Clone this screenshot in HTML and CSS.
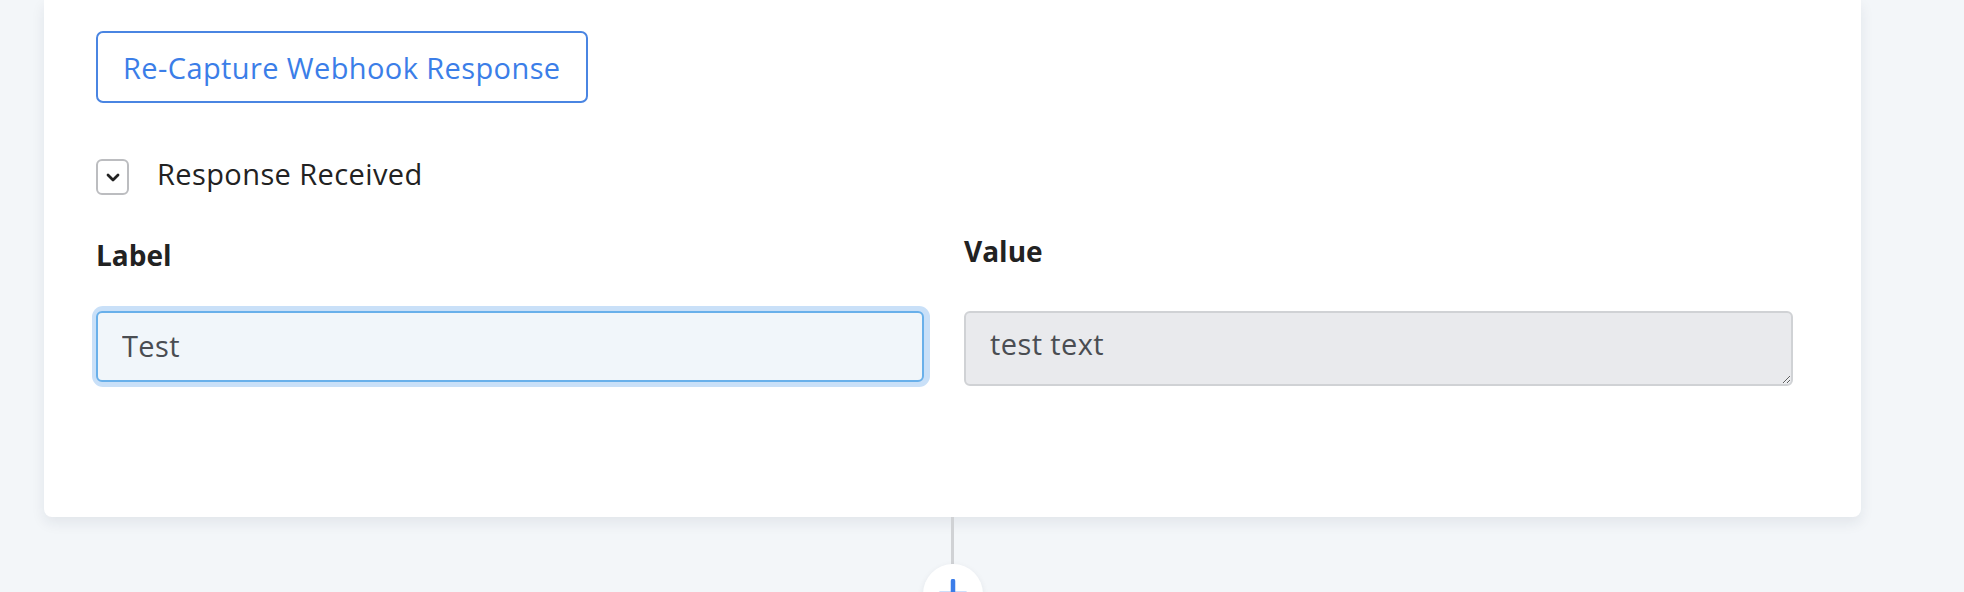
FILE: index.html
```html
<!DOCTYPE html>
<html lang="en">
<head>
    <meta charset="UTF-8">
    <meta name="viewport" content="width=device-width, initial-scale=1.0">
    <title>Webhook Response</title>
    <link rel="stylesheet" href="styles.css">
</head>
<body>
    <div class="canvas">
        <div class="card">
            <button class="btn-outline" type="button">Re-Capture Webhook Response</button>

            <div class="toggle-row">
                <span class="toggle-box">
                    <svg width="14" height="9" viewBox="0 0 14 9">
                        <path d="M2 2 L7 7 L12 2" fill="none" stroke="#222" stroke-width="2.8" stroke-linecap="round" stroke-linejoin="round"/>
                    </svg>
                </span>
                <span class="toggle-text">Response Received</span>
            </div>

            <div class="fields">
                <div class="field">
                    <label class="field-label label-left" for="label">Label</label>
                    <input class="text-input is-focused" id="label" type="text" value="Test">
                </div>
                <div class="field">
                    <label class="field-label label-right" for="value">Value</label>
                    <textarea class="text-area" id="value" rows="1" readonly>test text</textarea>
                </div>
            </div>
        </div>

        <div class="connector">
            <div class="connector-line"></div>
            <div class="add-step">
                <svg width="30" height="30" viewBox="0 0 30 30">
                    <path d="M15 2 V28 M2 15 H28" stroke="#3b7de9" stroke-width="4.5" stroke-linecap="round"/>
                </svg>
            </div>
        </div>
    </div>
</body>
</html>
```

FILE: styles.css
```css
body {
    font-family: 'Open Sans', 'Lato', Arial, sans-serif;
    background-color: #f3f6f9;
    color: #222;
    margin: 0;
    padding: 0;
}
.canvas {
    width: 1817px;
    margin-left: 44px;
}
.card {
    background: #ffffff;
    border-radius: 0 0 8px 8px;
    box-shadow: 0 6px 14px rgba(30, 40, 60, 0.08);
    padding: 31px 68px 131px 52px;
}
.btn-outline {
    display: block;
    height: 72px;
    padding: 0 25px;
    font-family: inherit;
    font-size: 29px;
    letter-spacing: 0.4px;
    color: #3b7ee8;
    background: #fff;
    border: 2px solid #4a85e2;
    border-radius: 7px;
    cursor: pointer;
}
.toggle-row {
    display: flex;
    align-items: center;
    margin-top: 54px;
}
.toggle-box {
    display: flex;
    align-items: center;
    justify-content: center;
    width: 29px;
    height: 32px;
    border: 2px solid #bcbdc0;
    border-radius: 6px;
}
.toggle-text {
    margin-left: 28px;
    padding-bottom: 6px;
    font-size: 29px;
    letter-spacing: 0.4px;
    line-height: 34px;
    color: #222;
}
.fields {
    display: grid;
    grid-template-columns: 828px 829px;
    column-gap: 40px;
    margin-top: 41px;
}
.field-label {
    display: block;
    font-size: 28px;
    font-weight: bold;
    line-height: 34px;
    color: #222;
}
.label-left {
    margin-bottom: 39px;
}
.label-right {
    margin-top: -4px;
    margin-bottom: 43px;
}
.text-input,
.text-area {
    display: block;
    box-sizing: border-box;
    width: 100%;
    font-family: inherit;
    font-size: 29px;
    letter-spacing: 0.4px;
    color: #4a4d52;
    border-radius: 6px;
    outline: none;
    margin: 0;
}
.text-input {
    height: 71px;
    padding: 0 24px 3px;
    background: #f1f6fa;
    border: 2px solid #69b0ea;
}
.text-input.is-focused {
    box-shadow: 1px 0 0 5px #c9e0f8;
}
.text-area {
    height: 75px;
    padding: 12px 24px 0;
    line-height: 38px;
    background: #e9eaed;
    border: 2px solid #d0d2d5;
    resize: vertical;
}
.connector {
    display: flex;
    flex-direction: column;
    align-items: center;
}
.connector-line {
    width: 3px;
    height: 47px;
    background: #d0d2d5;
}
.add-step {
    display: flex;
    align-items: center;
    justify-content: center;
    width: 60px;
    height: 60px;
    border-radius: 50%;
    background: #fff;
    box-shadow: 0 2px 6px rgba(30, 40, 60, 0.08);
}
```
